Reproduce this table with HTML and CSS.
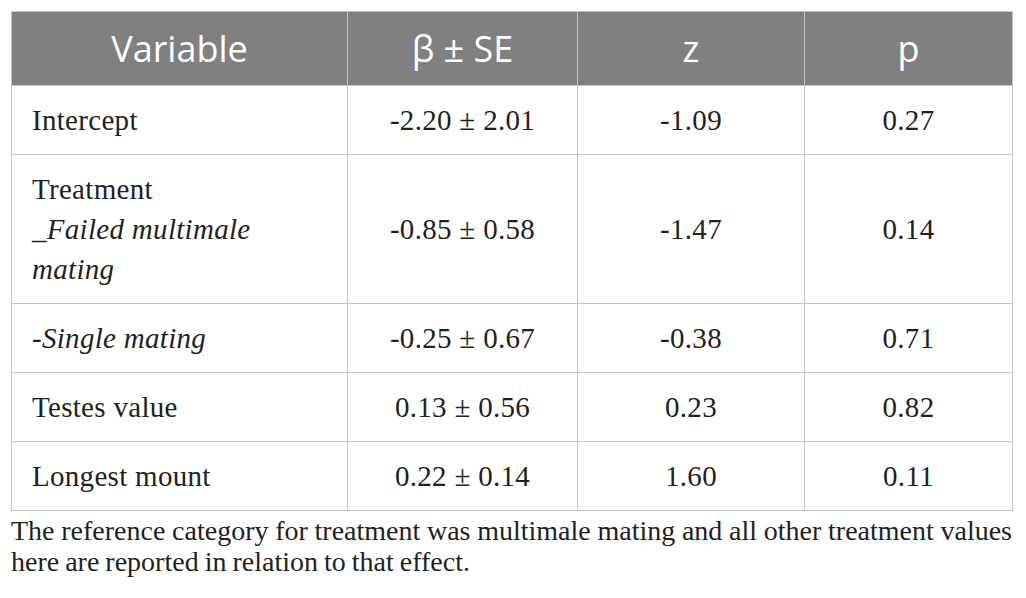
FILE: index.html
```html
<!DOCTYPE html>
<html lang="en">
<head>
<meta charset="utf-8">
<title>Table</title>
<link rel="stylesheet" href="styles.css">
</head>
<body>
<div class="wrap">
  <table class="data">
    <colgroup>
      <col class="c1"><col class="c2"><col class="c3"><col class="c4">
    </colgroup>
    <thead>
      <tr><th>Variable</th><th>β ± SE</th><th>z</th><th>p</th></tr>
    </thead>
    <tbody>
      <tr><td class="lab">Intercept</td><td>-2.20 ± 2.01</td><td>-1.09</td><td>0.27</td></tr>
      <tr><td class="lab">Treatment<br><em>_Failed multimale<br>mating</em></td><td>-0.85 ± 0.58</td><td>-1.47</td><td>0.14</td></tr>
      <tr><td class="lab"><em>-Single mating</em></td><td>-0.25 ± 0.67</td><td>-0.38</td><td>0.71</td></tr>
      <tr><td class="lab">Testes value</td><td>0.13 ± 0.56</td><td>0.23</td><td>0.82</td></tr>
      <tr><td class="lab">Longest mount</td><td>0.22 ± 0.14</td><td>1.60</td><td>0.11</td></tr>
    </tbody>
  </table>
  <p class="note">The reference category for treatment was multimale mating and all other treatment values here are reported in relation to that effect.</p>
</div>
</body>
</html>
```

FILE: styles.css
```css
html, body {
  margin: 0;
  padding: 0;
  background: #ffffff;
}

.wrap {
  padding: 11px 15px 0 11px;
  width: 1000px;
}

.data {
  border-collapse: collapse;
  width: 1001px;
  table-layout: fixed;
  font-family: "Liberation Serif", "Times New Roman", serif;
  font-size: 29px;
  letter-spacing: 0.3px;
  color: #231f20;
}

.c1 { width: 336px; }
.c2 { width: 230px; }
.c3 { width: 227px; }
.c4 { width: 208px; }

.data th,
.data td {
  border: 1px solid #c4c4c4;
}

.data th {
  background: #808080;
  color: #ffffff;
  font-family: "Open Sans", "DejaVu Sans", sans-serif;
  font-weight: 400;
  font-size: 36px;
  letter-spacing: 0;
  height: 73px;
  padding: 0;
  text-align: center;
  vertical-align: middle;
  line-height: 40px;
}

.data td {
  padding: 14px 20px;
  line-height: 40px;
  text-align: center;
  vertical-align: middle;
}

.data td.lab {
  text-align: left;
}

.note {
  margin: 4px 0 0 0;
  width: 1001px;
  font-family: "Liberation Serif", "Times New Roman", serif;
  font-size: 28px;
  word-spacing: -1px;
  line-height: 31px;
  color: #231f20;
  text-align: justify;
}
```
